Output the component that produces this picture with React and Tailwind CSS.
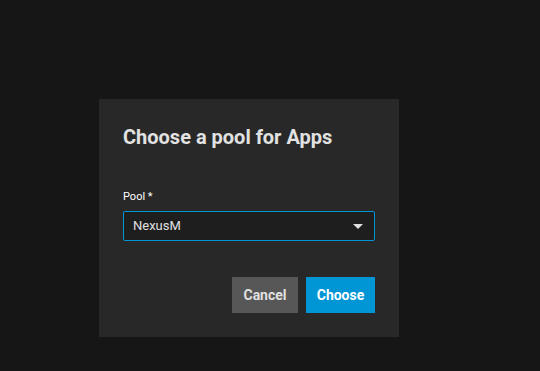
import React from 'react';

const App = () => {
  return (
    <div className="min-h-[371px] w-full bg-[#161616] pl-[99px] pt-[99px] font-['Roboto',sans-serif]">
      {/* Dialog */}
      <div className="w-[300px] bg-[#282828] p-6">
        <h2 className="text-[20px] leading-[28px] font-bold text-[#e2e2e2]">Choose a pool for Apps</h2>

        <div className="mt-[39px]">
          <label className="block text-[11px] leading-[14px] font-normal text-white">Pool *</label>
          <div className="mt-[7px] flex h-[30px] items-center justify-between rounded-[2px] border border-[#0095d5] bg-[#1e1e1e] pl-[9px] pr-[11px]">
            <span className="text-[13px] text-[#e0e0e0]">NexusM</span>
            <svg width="10" height="5" viewBox="0 0 10 5">
              <path d="M0 0 L10 0 L5 5 Z" fill="#e0e0e0" />
            </svg>
          </div>
        </div>

        <div className="mt-9 flex justify-end gap-2">
          <button className="h-9 w-[66px] bg-[#575757] text-[14px] font-bold text-[#e0e0e0]">Cancel</button>
          <button className="h-9 w-[69px] bg-[#0095d5] text-[14px] font-bold text-white">Choose</button>
        </div>
      </div>
    </div>
  );
};

export default App;
